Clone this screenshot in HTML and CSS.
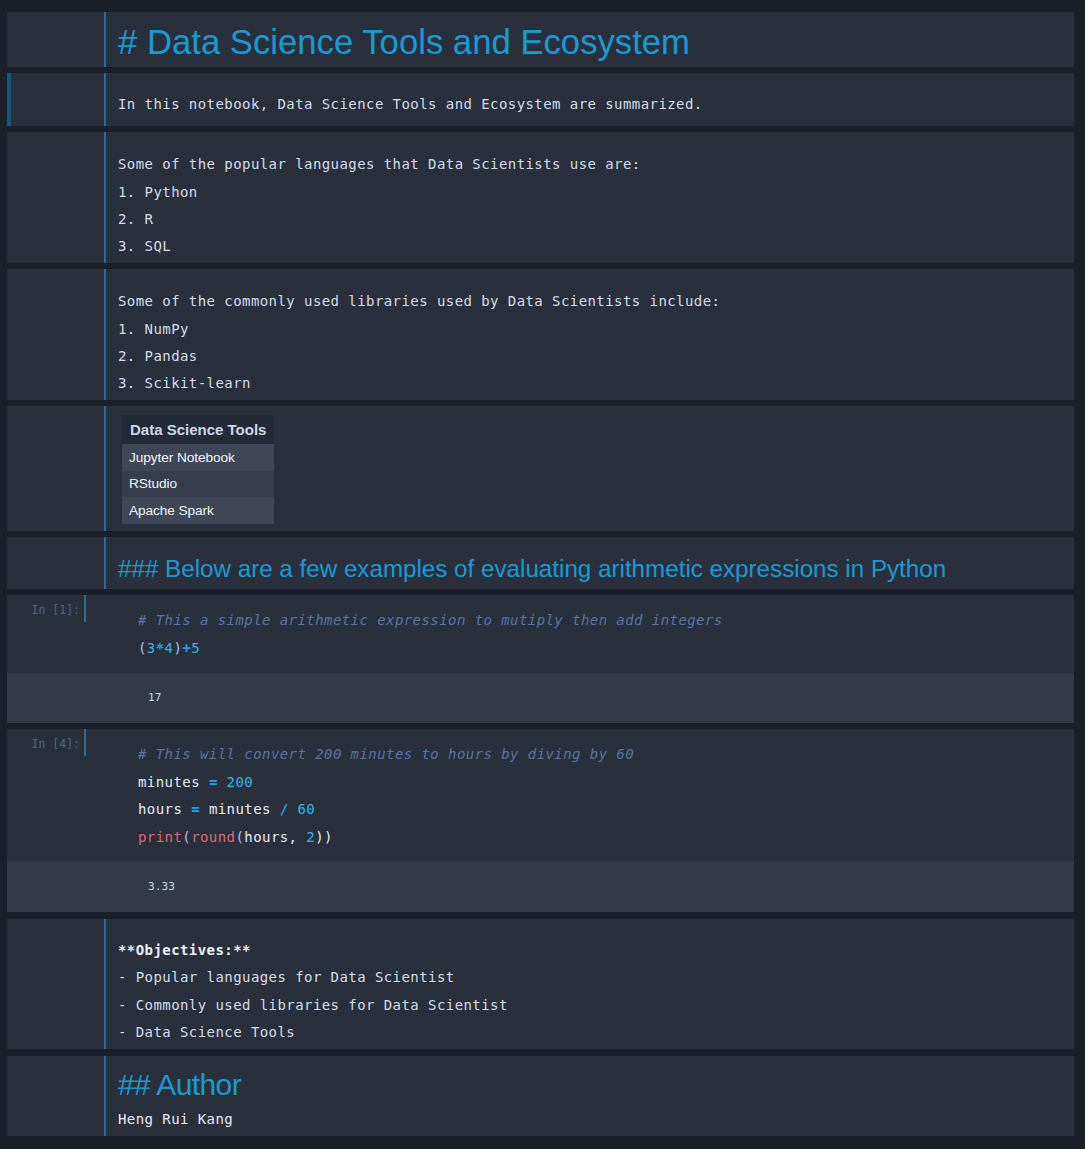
FILE: index.html
```html
<!DOCTYPE html>
<html>
<head>
<meta charset="utf-8">
<title>Data Science Tools and Ecosystem</title>
<link rel="stylesheet" href="styles.css">
</head>
<body>
<div class="notebook">

  <div class="cell md">
    <div class="prompt"></div>
    <div class="content c-h1"><div class="h1"># Data Science Tools and Ecosystem</div></div>
  </div>

  <div class="cell md selected">
    <div class="prompt"></div>
    <div class="content mono c-intro"><div class="line">In this notebook, Data Science Tools and Ecosystem are summarized.</div></div>
  </div>

  <div class="cell md">
    <div class="prompt"></div>
    <div class="content mono c-list">
      <div class="line">Some of the popular languages that Data Scientists use are:</div>
      <div class="line">1. Python</div>
      <div class="line">2. R</div>
      <div class="line">3. SQL</div>
    </div>
  </div>

  <div class="cell md">
    <div class="prompt"></div>
    <div class="content mono c-list">
      <div class="line">Some of the commonly used libraries used by Data Scientists include:</div>
      <div class="line">1. NumPy</div>
      <div class="line">2. Pandas</div>
      <div class="line">3. Scikit-learn</div>
    </div>
  </div>

  <div class="cell md">
    <div class="prompt"></div>
    <div class="content c-table">
      <table class="tools">
        <thead><tr><th>Data Science Tools</th></tr></thead>
        <tbody>
          <tr class="odd"><td>Jupyter Notebook</td></tr>
          <tr class="even"><td>RStudio</td></tr>
          <tr class="odd"><td>Apache Spark</td></tr>
        </tbody>
      </table>
    </div>
  </div>

  <div class="cell md">
    <div class="prompt"></div>
    <div class="content c-h3"><div class="h3">### Below are a few examples of evaluating arithmetic expressions in Python</div></div>
  </div>

  <div class="cell code">
    <div class="input">
      <div class="in-prompt">In [1]:</div>
      <div class="source">
        <div class="cline"><span class="cm"># This a simple arithmetic expression to mutiply then add integers</span></div>
        <div class="cline"><span class="pn">(</span><span class="nm">3</span><span class="op">*</span><span class="nm">4</span><span class="pn">)</span><span class="op">+</span><span class="nm">5</span></div>
      </div>
    </div>
    <div class="output"><div class="out-text">17</div></div>
  </div>

  <div class="cell code">
    <div class="input">
      <div class="in-prompt">In [4]:</div>
      <div class="source">
        <div class="cline"><span class="cm"># This will convert 200 minutes to hours by diving by 60</span></div>
        <div class="cline"><span class="id">minutes</span> <span class="op">=</span> <span class="nm">200</span></div>
        <div class="cline"><span class="id">hours</span> <span class="op">=</span> <span class="id">minutes</span> <span class="op">/</span> <span class="nm">60</span></div>
        <div class="cline"><span class="bi">print</span><span class="pn">(</span><span class="bi">round</span><span class="pn">(</span><span class="id">hours</span><span class="id">,</span> <span class="nm">2</span><span class="id">))</span></div>
      </div>
    </div>
    <div class="output"><div class="out-text">3.33</div></div>
  </div>

  <div class="cell md c-gap">
    <div class="prompt"></div>
    <div class="content mono c-obj">
      <div class="line strong">**Objectives:**</div>
      <div class="line">- Popular languages for Data Scientist</div>
      <div class="line">- Commonly used libraries for Data Scientist</div>
      <div class="line">- Data Science Tools</div>
    </div>
  </div>

  <div class="cell md c-gap">
    <div class="prompt"></div>
    <div class="content c-author">
      <div class="h2">## Author</div>
      <div class="line mono-line">Heng Rui Kang</div>
    </div>
  </div>

</div>
</body>
</html>
```

FILE: styles.css
```css
html, body {
  margin: 0;
  padding: 0;
  background: #1b2028;
}

.notebook {
  display: flex;
  flex-direction: column;
  gap: 6px;
  padding: 12px 11px 13px 7px;
}

.cell {
  background: #29303c;
}

.cell.md {
  display: flex;
}

.cell.c-gap {
  margin-top: 1px;
}

.cell.selected {
  box-shadow: inset 4px 0 0 #0e5a7e;
}

.prompt {
  width: 97px;
  flex: none;
}

.content {
  flex: 1;
  border-left: 2px solid #2b6e94;
  padding-left: 12px;
  color: #d6dde9;
}

.mono, .mono-line {
  font-family: "DejaVu Sans Mono", "Liberation Mono", monospace;
  font-size: 14px;
  letter-spacing: 0.43px;
}

.line {
  line-height: 27.3px;
  white-space: pre;
}

.strong {
  font-weight: bold;
  color: #eef2f8;
}

.h1, .h2, .h3 {
  font-family: "Liberation Sans", Arial, sans-serif;
  color: #1a9ad5;
  font-weight: normal;
  white-space: pre;
}

.h1 {
  font-size: 34.7px;
  line-height: 40px;
}

.h3 {
  font-size: 24.2px;
  line-height: 30px;
}

.h2 {
  font-size: 30px;
  line-height: 36px;
  letter-spacing: -0.6px;
  margin-bottom: 2.8px;
}

.c-h1 { padding-top: 10px; padding-bottom: 5px; }
.c-intro { padding-top: 18.35px; padding-bottom: 7.35px; }
.c-list { padding-top: 19.35px; padding-bottom: 2.35px; }
.c-obj { padding-top: 18.35px; padding-bottom: 2.35px; }
.c-h3 { padding-top: 17.2px; padding-bottom: 4.8px; }
.c-author { padding-top: 11.6px; padding-bottom: 2.3px; }
.c-author .mono-line { color: #e6ebf3; }

.c-table {
  padding-top: 9px;
  padding-bottom: 7px;
}

.tools {
  border-collapse: collapse;
  margin-left: 4px;
  font-family: "Liberation Sans", Arial, sans-serif;
  width: 152px;
}

.tools th {
  background: #232a35;
  color: #cdd7e8;
  font-size: 15px;
  font-weight: bold;
  text-align: left;
  height: 29px;
  padding: 0 0 0 8px;
  white-space: nowrap;
}

.tools td {
  color: #f2f5fa;
  font-size: 13.7px;
  letter-spacing: -0.1px;
  padding: 0 0 0 7px;
  white-space: nowrap;
}

.tools tr.odd td {
  background: #3e4658;
  height: 27px;
}

.tools tr.even td {
  background: #363d4c;
  height: 26px;
}

/* code cells */
.input {
  display: flex;
  align-items: flex-start;
}

.in-prompt {
  width: 73px;
  height: 27px;
  flex: none;
  padding-right: 4px;
  border-right: 2px solid #2b6e94;
  text-align: right;
  font-family: "DejaVu Sans Mono", "Liberation Mono", monospace;
  font-size: 11.5px;
  line-height: 30px;
  color: #4f6686;
}

.source {
  flex: 1;
  padding: 12.5px 0 10.5px 52px;
  font-family: "DejaVu Sans Mono", "Liberation Mono", monospace;
  font-size: 14px;
  letter-spacing: 0.43px;
}

.cline {
  line-height: 27.5px;
  white-space: pre;
  color: #e6ebf3;
}

.cm {
  color: #5873a8;
  font-style: italic;
}

.nm {
  color: #33b5ee;
}

.op {
  color: #1ea2ea;
  font-weight: bold;
}

.pn {
  color: #a8c8e8;
}

.id {
  color: #e6ebf3;
}

.bi {
  color: #e0666e;
}

.output {
  background: #333a48;
  height: 50px;
  display: flex;
  align-items: center;
}

.out-text {
  padding-left: 141px;
  font-family: "DejaVu Sans Mono", "Liberation Mono", monospace;
  font-size: 11px;
  letter-spacing: 0.15px;
  color: #cdd5e2;
}
```
